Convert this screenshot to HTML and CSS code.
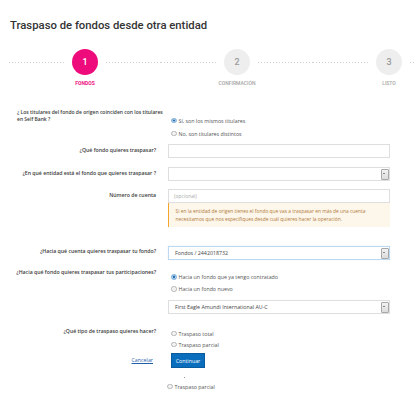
FILE: index.html
```html
<!DOCTYPE html>
<html lang="es">
<head>
<meta charset="utf-8">
<title>Traspaso de fondos desde otra entidad</title>
<link rel="stylesheet" href="styles.css">
</head>
<body>
<div class="page">
  <h1 class="title">Traspaso de fondos desde otra entidad</h1>

  <div class="stepper">
    <div class="step active">
      <div class="step-track"><span class="dots"></span><span class="circle">1</span><span class="dots"></span></div>
      <div class="step-label">Fondos</div>
    </div>
    <div class="step">
      <div class="step-track"><span class="dots"></span><span class="circle">2</span><span class="dots"></span></div>
      <div class="step-label">Confirmación</div>
    </div>
    <div class="step">
      <div class="step-track"><span class="dots"></span><span class="circle">3</span><span class="dots"></span></div>
      <div class="step-label">Listo</div>
    </div>
  </div>

  <form class="form">
    <div class="row row-owners">
      <label class="label label-left">¿ Los titulares del fondo de origen coinciden con los titulares en Self Bank ?</label>
      <div class="field radios radios-owners">
        <div class="radio"><span class="dot checked"></span>Sí, son los mismos titulares</div>
        <div class="radio"><span class="dot"></span>No, son titulares distintos</div>
      </div>
    </div>

    <div class="row row-fund">
      <label class="label">¿Qué fondo quieres traspasar?</label>
      <div class="field"><div class="input"></div></div>
    </div>

    <div class="row row-entity">
      <label class="label">¿En qué entidad está el fondo que quieres traspasar ?</label>
      <div class="field"><div class="select"><span class="select-text"></span><span class="select-btn"></span></div></div>
    </div>

    <div class="row row-account">
      <label class="label">Número de cuenta</label>
      <div class="field">
        <div class="input placeholder">(opcional)</div>
        <div class="warning">Si en la entidad de origen tienes el fondo que vas a traspasar en más de una cuenta necesitamos que nos especifiques desde cuál quieres hacer la operación.</div>
      </div>
    </div>

    <div class="row row-dest">
      <label class="label">¿Hacia qué cuenta quieres traspasar tu fondo?</label>
      <div class="field"><div class="select focused"><span class="select-text">Fondos / 2442018732</span><span class="select-btn"></span></div></div>
    </div>

    <div class="row row-target">
      <label class="label">¿Hacia qué fondo quieres traspasar tus participaciones?</label>
      <div class="field">
        <div class="radios radios-target">
          <div class="radio"><span class="dot checked"></span>Hacia un fondo que ya tengo contratado</div>
          <div class="radio"><span class="dot"></span>Hacia un fondo nuevo</div>
        </div>
        <div class="select"><span class="select-text">First Eagle Amundi International AU-C</span><span class="select-btn"></span></div>
      </div>
    </div>

    <div class="row row-type">
      <label class="label">¿Qué tipo de traspaso quieres hacer?</label>
      <div class="field radios radios-type">
        <div class="radio"><span class="dot"></span>Traspaso total</div>
        <div class="radio"><span class="dot"></span>Traspaso parcial</div>
      </div>
    </div>

    <div class="row row-actions">
      <div class="label cancel-cell"><a class="cancel" href="#">Cancelar</a></div>
      <div class="field"><button type="button" class="btn">Continuar</button></div>
    </div>

    <div class="stray">
      <span class="speck"></span>
      <div class="radio stray-radio"><span class="dot"></span>Traspaso parcial</div>
    </div>
  </form>
</div>
</body>
</html>
```

FILE: styles.css
```css
html, body {
  margin: 0;
  padding: 0;
  background: #ffffff;
  overflow: hidden;
}

.page {
  width: 415px;
  height: 415px;
  overflow: hidden;
  font-family: "Open Sans", "Liberation Sans", sans-serif;
  color: #333;
}

.title {
  margin: 0;
  padding: 19px 0 0 10px;
  font-family: Roboto, "Liberation Sans", sans-serif;
  font-size: 11.3px;
  line-height: 14px;
  font-weight: 500;
  color: #333;
}

/* Stepper */
.stepper {
  display: flex;
  margin: 16px 0 0 9px;
  width: 470px;
}

.step {
  width: 152px;
  flex: none;
  display: flex;
  flex-direction: column;
  align-items: stretch;
}

.step-track {
  display: flex;
  align-items: center;
  height: 26px;
}

.dots {
  flex: 1;
  height: 1px;
  background-image: linear-gradient(to right, #cfcfcf 1px, transparent 1px);
  background-size: 3px 1px;
}

.circle {
  width: 26px;
  height: 26px;
  margin: 0 8px;
  border-radius: 50%;
  background: #eeeeee;
  color: #9a9a9a;
  font-family: Roboto, "Liberation Sans", sans-serif;
  font-size: 9px;
  font-weight: 500;
  display: flex;
  align-items: center;
  justify-content: center;
}

.step.active .circle {
  background: #ee0c7c;
  color: #fff;
}

.step-label {
  margin-top: 6px;
  text-align: center;
  font-family: Roboto, "Liberation Sans", sans-serif;
  font-size: 5px;
  line-height: 5px;
  font-weight: 500;
  text-transform: uppercase;
  color: #a5a5a5;
}

.step.active .step-label {
  color: #ee0c7c;
  font-weight: 700;
}

/* Form */
.form {
  display: flex;
  flex-direction: column;
  margin-top: 23px;
}

.row {
  display: grid;
  grid-template-columns: 156px 222px;
  column-gap: 12px;
  align-items: start;
}

.label {
  font-size: 5.2px;
  line-height: 7px;
  font-weight: 600;
  color: #3a3a3a;
  text-align: right;
  padding-top: 3px;
}

.label-left {
  text-align: left;
  font-size: 5px;
  padding: 0 0 0 17px;
  margin-right: -9px;
}

.field {
  display: flex;
  flex-direction: column;
}

.radios {
  display: flex;
  flex-direction: column;
}

.radio {
  display: flex;
  align-items: center;
  height: 13px;
  font-size: 5.3px;
  color: #555;
  padding-left: 3px;
}

.dot {
  width: 3.5px;
  height: 3.5px;
  border: 0.6px solid #b5b5b5;
  border-radius: 50%;
  background: #f3f3f3;
  margin-right: 2px;
  box-sizing: content-box;
  flex: none;
}

.dot.checked {
  background: #1f6fb5;
  border-color: #9cc1e3;
  box-shadow: inset 0 0 0 0.6px #ffffff;
}

.radios-owners {
  padding-top: 5px;
}

.row-fund { margin-top: 4px; }
.row-entity { margin-top: 9px; }
.row-account { margin-top: 8px; }
.row-dest { margin-top: 19px; }
.row-target { margin-top: 9px; }
.row-type { margin-top: 13.5px; }
.row-actions { margin-top: 3px; }

.row-dest .label { padding-top: 2px; }
.row-target .label { padding-top: 0; }
.row-type .label { padding-top: 0; }

.radios-target {
  padding-top: 2px;
}

.radios-target .radio { height: 12px; }

.radios-target + .select { margin-top: 5px; }

.radios-type { padding-top: 0.5px; }
.radios-type .radio { height: 11px; }

.input {
  height: 14px;
  box-sizing: border-box;
  border: 1px solid #dedede;
  background: #fff;
  font-size: 5px;
  display: flex;
  align-items: center;
  padding-left: 5px;
}

.placeholder {
  color: #aaa;
}

.select {
  height: 14px;
  box-sizing: border-box;
  border: 1px solid #dedede;
  background: #fff;
  display: flex;
  align-items: stretch;
}

.select.focused {
  border-color: #bcd9f1;
  box-shadow: 0 0 1px #cfe4f6;
}

.select-text {
  flex: 1;
  font-size: 5.3px;
  color: #444;
  display: flex;
  align-items: center;
  padding-left: 6px;
}

.select-btn {
  width: 6px;
  margin: 0.5px;
  border: 0.6px solid #a8a8a8;
  border-radius: 1px;
  background: linear-gradient(#f2f2f2, #dcdcdc);
  position: relative;
  flex: none;
}

.select-btn::after {
  content: "";
  position: absolute;
  left: 50%;
  top: 50%;
  margin: -0.8px 0 0 -1.2px;
  border-left: 1.2px solid transparent;
  border-right: 1.2px solid transparent;
  border-top: 1.6px solid #222;
}

.warning {
  background: #fdf6ea;
  border-left: 1.5px solid #f3a52c;
  color: #b07b3c;
  font-size: 4.9px;
  line-height: 8px;
  padding: 4px 8px 4px 6.5px;
}

.cancel-cell {
  padding-top: 4px;
  padding-right: 3px;
}

.cancel {
  color: #1f5fa8;
  text-decoration: underline;
  font-weight: 400;
  font-size: 5.3px;
}

.btn {
  width: 34px;
  height: 15px;
  padding: 0;
  margin-left: 3px;
  border: 1px solid #0a5c9e;
  background: #0b6ebd;
  color: #fff;
  font-family: "Open Sans", "Liberation Sans", sans-serif;
  font-size: 5.3px;
}

.stray {
  display: flex;
  flex-direction: column;
  margin-top: 9px;
}

.speck {
  width: 1px;
  height: 1px;
  background: #9a9a9a;
  margin-left: 184px;
}

.stray-radio {
  margin-left: 164px;
  margin-top: 2px;
}
```
